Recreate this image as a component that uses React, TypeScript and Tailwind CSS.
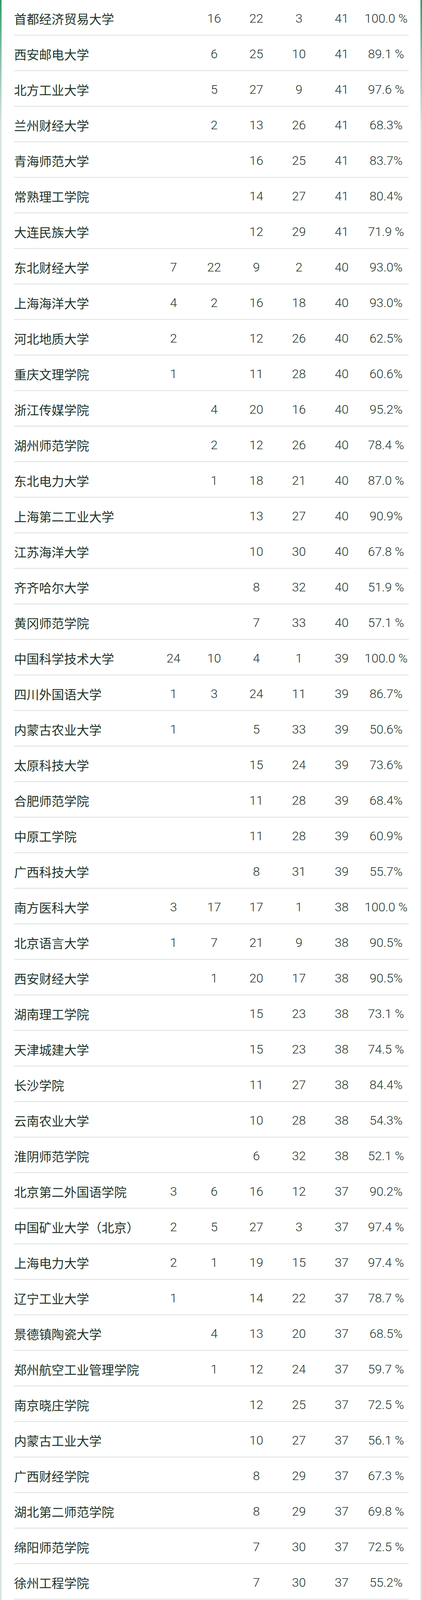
const rows: [string, string, string, string, string, string, string][] = [
  ["首都经济贸易大学", "", "16", "22", "3", "41", "100.0 %"],
  ["西安邮电大学", "", "6", "25", "10", "41", "89.1 %"],
  ["北方工业大学", "", "5", "27", "9", "41", "97.6 %"],
  ["兰州财经大学", "", "2", "13", "26", "41", "68.3%"],
  ["青海师范大学", "", "", "16", "25", "41", "83.7%"],
  ["常熟理工学院", "", "", "14", "27", "41", "80.4%"],
  ["大连民族大学", "", "", "12", "29", "41", "71.9 %"],
  ["东北财经大学", "7", "22", "9", "2", "40", "93.0%"],
  ["上海海洋大学", "4", "2", "16", "18", "40", "93.0%"],
  ["河北地质大学", "2", "", "12", "26", "40", "62.5%"],
  ["重庆文理学院", "1", "", "11", "28", "40", "60.6%"],
  ["浙江传媒学院", "", "4", "20", "16", "40", "95.2%"],
  ["湖州师范学院", "", "2", "12", "26", "40", "78.4 %"],
  ["东北电力大学", "", "1", "18", "21", "40", "87.0 %"],
  ["上海第二工业大学", "", "", "13", "27", "40", "90.9%"],
  ["江苏海洋大学", "", "", "10", "30", "40", "67.8 %"],
  ["齐齐哈尔大学", "", "", "8", "32", "40", "51.9 %"],
  ["黄冈师范学院", "", "", "7", "33", "40", "57.1 %"],
  ["中国科学技术大学", "24", "10", "4", "1", "39", "100.0 %"],
  ["四川外国语大学", "1", "3", "24", "11", "39", "86.7%"],
  ["内蒙古农业大学", "1", "", "5", "33", "39", "50.6%"],
  ["太原科技大学", "", "", "15", "24", "39", "73.6%"],
  ["合肥师范学院", "", "", "11", "28", "39", "68.4%"],
  ["中原工学院", "", "", "11", "28", "39", "60.9%"],
  ["广西科技大学", "", "", "8", "31", "39", "55.7%"],
  ["南方医科大学", "3", "17", "17", "1", "38", "100.0 %"],
  ["北京语言大学", "1", "7", "21", "9", "38", "90.5%"],
  ["西安财经大学", "", "1", "20", "17", "38", "90.5%"],
  ["湖南理工学院", "", "", "15", "23", "38", "73.1 %"],
  ["天津城建大学", "", "", "15", "23", "38", "74.5 %"],
  ["长沙学院", "", "", "11", "27", "38", "84.4%"],
  ["云南农业大学", "", "", "10", "28", "38", "54.3%"],
  ["淮阴师范学院", "", "", "6", "32", "38", "52.1 %"],
  ["北京第二外国语学院", "3", "6", "16", "12", "37", "90.2%"],
  ["中国矿业大学（北京）", "2", "5", "27", "3", "37", "97.4 %"],
  ["上海电力大学", "2", "1", "19", "15", "37", "97.4 %"],
  ["辽宁工业大学", "1", "", "14", "22", "37", "78.7 %"],
  ["景德镇陶瓷大学", "", "4", "13", "20", "37", "68.5%"],
  ["郑州航空工业管理学院", "", "1", "12", "24", "37", "59.7 %"],
  ["南京晓庄学院", "", "", "12", "25", "37", "72.5 %"],
  ["内蒙古工业大学", "", "", "10", "27", "37", "56.1 %"],
  ["广西财经学院", "", "", "8", "29", "37", "67.3 %"],
  ["湖北第二师范学院", "", "", "8", "29", "37", "69.8 %"],
  ["绵阳师范学院", "", "", "7", "30", "37", "72.5 %"],
  ["徐州工程学院", "", "", "7", "30", "37", "55.2%"],
  ["长江师范学院", "", "", "5", "32", "37", "67.3 %"],
  ["南京审计大学", "2", "9", "24", "1", "36", "97.3 %"],
  ["成都中医药大学", "2", "6", "17", "11", "36", "100.0 %"],
  ["吉林农业大学", "1", "", "12", "23", "36", "69.2 %"],
  ["上海立信会计金融学院", "", "", "16", "20", "36", "94.7 %"],
  ["常州工学院", "", "", "11", "25", "36", "75.0 %"],
  ["西交利物浦大学", "", "", "9", "27", "36", "81.8 %"],
  ["安徽医科大学", "2", "6", "22", "5", "35", "97.2 %"],
  ["重庆医科大学", "2", "6", "18", "9", "35", "100.0 %"],
  ["南方科技大学", "1", "7", "22", "5", "35", "94.6%"],
  ["吉林财经大学", "", "1", "21", "13", "35", "92.1 %"],
  ["北方民族大学", "", "", "11", "24", "35", "47.9 %"],
  ["新疆师范大学", "", "", "11", "24", "35", "57.4 %"],
  ["湖南财政经济学院", "", "", "8", "27", "35", "77.8 %"],
  ["陕西理工大学", "", "", "4", "31", "35", "59.3 %"],
  ["湖北工程学院", "", "", "2", "33", "35", "55.6%"],
  ["北京建筑大学", "1", "6", "22", "5", "34", "97.1 %"],
  ["中国民航大学", "1", "3", "16", "14", "34", "89.5 %"],
  ["贵州医科大学", "1", "1", "16", "16", "34", "77.3 %"],
  ["浙江海洋大学", "1", "", "13", "20", "34", "81.0 %"],
  ["大连外国语大学", "", "7", "11", "16", "34", "82.9%"],
  ["西藏民族大学", "", "1", "11", "22", "34", "57.6 %"],
  ["辽宁石油化工大学", "", "", "8", "26", "34", "68.0%"],
  ["闽江学院", "", "", "7", "27", "34", "58.6%"],
  ["重庆科技学院", "", "", "7", "27", "34", "49.3 %"],
  ["南京中医药大学", "5", "10", "15", "3", "33", "100.0 %"],
  ["广东药科大学", "2", "", "10", "21", "33", "70.2 %"],
  ["上海对外经贸大学", "1", "15", "15", "2", "33", "97.1 %"],
  ["北京印刷学院", "", "3", "20", "10", "33", "97.1 %"],
  ["西藏大学", "", "1", "12", "20", "33", "67.3 %"],
  ["浙江万里学院", "", "", "9", "24", "33", "63.5%"],
  ["台州学院", "", "", "7", "26", "33", "68.8%"],
  ["黑龙江科技大学", "", "", "6", "27", "33", "57.9 %"],
  ["湖北民族大学", "", "", "4", "29", "33", "66.0%"],
  ["长春大学", "", "", "2", "31", "33", "61.1 %"],
];

type Cells = [string, string, string, string, string, string, string];

function Row({ cells }: { cells: Cells }) {
  const [name, ...nums] = cells;
  return (
    <div className="ml-[32px] mr-[30px] flex h-[91px] items-center border-b-2 border-[#d9e2df] pt-[4px] text-[#1e3429]">
      <div className="w-[357px] shrink-0 whitespace-nowrap text-[32px] leading-none font-['Noto_Sans_CJK_SC',sans-serif]">
        {name}
      </div>
      <div className="grid flex-1 grid-cols-[102px_106px_110px_108px_111px_116px]">
        {nums.map((n, i) => (
          <div
            key={i}
            className="whitespace-nowrap text-center text-[32px] leading-none font-light font-['Roboto','Noto_Sans_CJK_SC',sans-serif]"
          >
            {n}
          </div>
        ))}
      </div>
    </div>
  );
}

export default function App() {
  return (
    <div className="h-[7280px] w-full overflow-hidden bg-[linear-gradient(180deg,#2b9b6b_0px,#8cc2a9_150px,#d7e4de_320px,#d7e4de_100%)] px-[4px]">
      <div className="h-full bg-white">
        {rows.map((r) => (
          <Row key={r[0]} cells={r} />
        ))}
      </div>
    </div>
  );
}
